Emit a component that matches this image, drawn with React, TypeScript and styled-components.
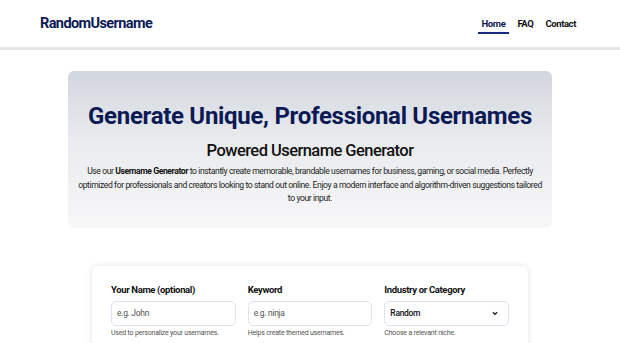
import React from 'react';
import styled, { createGlobalStyle } from 'styled-components';

const GlobalStyle = createGlobalStyle`
  * { box-sizing: border-box; }
  body {
    margin: 0;
    background: #fff;
    font-family: Roboto, "Liberation Sans", Arial, sans-serif;
    color: #111;
  }
`;

const Header = styled.header`
  height: 50px;
  display: flex;
  align-items: center;
  justify-content: space-between;
  padding: 0 44px 0 40px;
  border-bottom: 3px solid #e6e6e6;
`;

const Logo = styled.div`
  font-size: 14.5px;
  font-weight: 700;
  color: #0b1a55;
  letter-spacing: -0.6px;
`;

const Nav = styled.nav`
  display: flex;
  gap: 12px;
  align-items: center;
`;

const NavLink = styled.a<{ $active?: boolean }>`
  position: relative;
  font-size: 9.5px;
  font-weight: 700;
  letter-spacing: -0.4px;
  color: ${(p) => (p.$active ? '#0b1a55' : '#111')};
  text-decoration: none;
  &::after {
    content: '';
    display: ${(p) => (p.$active ? 'block' : 'none')};
    position: absolute;
    left: -4px;
    right: -4px;
    bottom: -5px;
    height: 2px;
    background: #1b2c80;
  }
`;

const Main = styled.main`
  display: flex;
  flex-direction: column;
  align-items: center;
  padding-top: 21px;
`;

const Hero = styled.section`
  width: 484px;
  border-radius: 6px;
  background: linear-gradient(180deg, #d2d6dd 0%, #e9ebee 45%, #f7f7f8 100%);
  padding: 29px 8px 22px;
  text-align: center;
`;

const Title = styled.h1`
  margin: 0;
  font-size: 24px;
  font-weight: 700;
  letter-spacing: -0.3px;
  color: #0b1a55;
  line-height: 32px;
  white-space: nowrap;
`;

const Subtitle = styled.h2`
  margin: 8px 0 0;
  font-size: 16.5px;
  font-weight: 500;
  letter-spacing: -0.55px;
  color: #111;
  line-height: 22px;
`;

const Lead = styled.p`
  margin: 3px 0 0;
  font-size: 8.6px;
  letter-spacing: -0.4px;
  line-height: 13.5px;
  color: #222;
  b { font-weight: 700; color: #111; }
`;

const FormCard = styled.section`
  width: 436px;
  margin-top: 38px;
  background: #fff;
  border-radius: 6px;
  box-shadow: 0 0 6px rgba(0, 0, 0, 0.12);
  padding: 18px 19px 20px;
  display: grid;
  grid-template-columns: repeat(3, 1fr);
  gap: 12px;
`;

const Field = styled.div`
  display: flex;
  flex-direction: column;
`;

const Label = styled.label`
  font-size: 9.5px;
  font-weight: 700;
  letter-spacing: -0.35px;
  color: #111;
  margin-bottom: 6px;
`;

const Input = styled.div<{ $select?: boolean }>`
  height: 25px;
  border: 1px solid #dde3ee;
  border-radius: 5px;
  display: flex;
  align-items: center;
  justify-content: space-between;
  padding: 0 10px 0 5px;
  font-size: 8.5px;
  letter-spacing: -0.3px;
  font-weight: ${(p) => (p.$select ? 500 : 400)};
  color: ${(p) => (p.$select ? '#111' : '#555')};
`;

const Help = styled.small`
  font-size: 7px;
  letter-spacing: -0.2px;
  color: #555;
  margin-top: 3px;
`;

const Chevron = () => (
  <svg width="6" height="5" viewBox="0 0 6 5" fill="none">
    <path d="M0.9 1.2 3 3.3 5.1 1.2" stroke="#222" strokeWidth="1.3" />
  </svg>
);

export default function App() {
  return (
    <>
      <GlobalStyle />
      <Header>
        <Logo>RandomUsername</Logo>
        <Nav>
          <NavLink $active>Home</NavLink>
          <NavLink>FAQ</NavLink>
          <NavLink>Contact</NavLink>
        </Nav>
      </Header>
      <Main>
        <Hero>
          <Title>Generate Unique, Professional Usernames</Title>
          <Subtitle>Powered Username Generator</Subtitle>
          <Lead>
            Use our <b>Username Generator</b> to instantly create memorable, brandable usernames for business, gaming, or social media. Perfectly optimized for professionals and creators looking to stand out online. Enjoy a modern interface and algorithm-driven suggestions tailored to your input.
          </Lead>
        </Hero>
        <FormCard>
          <Field>
            <Label>Your Name (optional)</Label>
            <Input>e.g. John</Input>
            <Help>Used to personalize your usernames.</Help>
          </Field>
          <Field>
            <Label>Keyword</Label>
            <Input>e.g. ninja</Input>
            <Help>Helps create themed usernames.</Help>
          </Field>
          <Field>
            <Label>Industry or Category</Label>
            <Input $select>
              Random
              <Chevron />
            </Input>
            <Help>Choose a relevant niche.</Help>
          </Field>
        </FormCard>
      </Main>
    </>
  );
}
